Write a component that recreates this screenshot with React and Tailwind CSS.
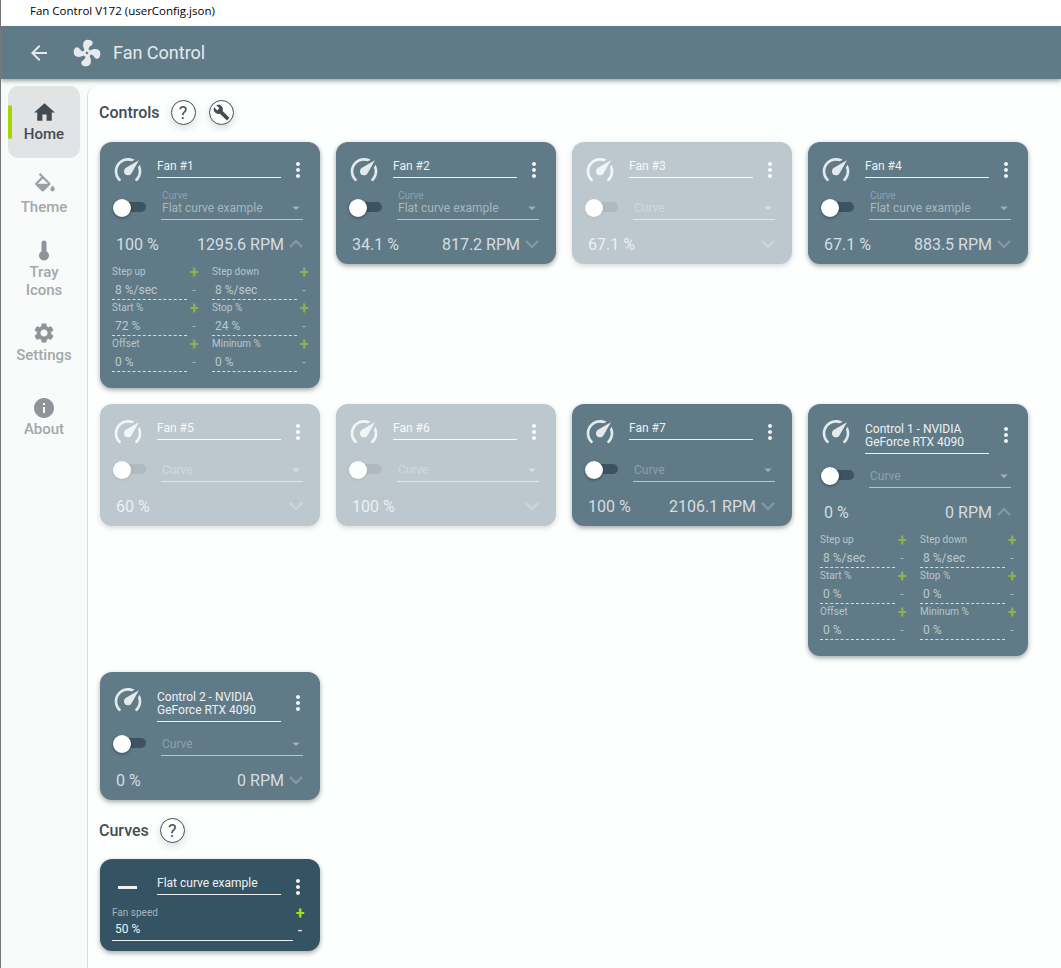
import React from 'react';
import { MdHome, MdSettings, MdInfo, MdBuild, MdArrowBack, MdMoreVert, MdExpandMore, MdExpandLess, MdArrowDropDown } from 'react-icons/md';

const FAN = "M12,11A1,1 0 0,0 11,12A1,1 0 0,0 12,13A1,1 0 0,0 13,12A1,1 0 0,0 12,11M12.5,2C17,2 17.11,5.57 14.75,6.75C13.76,7.24 13.32,8.29 13.13,9.22C13.61,9.42 14.03,9.73 14.35,10.13C18.05,8.13 22.03,8.92 22.03,12.5C22.03,17 18.46,17.1 17.28,14.73C16.78,13.74 15.72,13.3 14.79,13.11C14.59,13.59 14.28,14 13.88,14.34C15.87,18.03 15.08,22 11.5,22C7,22 6.91,18.42 9.27,17.24C10.25,16.75 10.69,15.71 10.89,14.79C10.4,14.59 9.97,14.27 9.65,13.87C5.96,15.85 2,15.07 2,11.5C2,7 5.56,6.89 6.74,9.26C7.24,10.25 8.29,10.68 9.22,10.87C9.41,10.39 9.73,9.97 10.14,9.65C8.15,5.96 8.94,2 12.5,2Z";
const GAUGE = "M12,16A3,3 0 0,1 9,13C9,11.88 9.61,10.9 10.5,10.39L20.21,4.77L14.68,14.35C14.18,15.33 13.17,16 12,16M12,3C13.81,3 15.5,3.5 16.97,4.32L14.87,5.53C14,5.19 13,5 12,5A8,8 0 0,0 4,13C4,15.21 4.89,17.21 6.34,18.65H6.35C6.74,19.04 6.74,19.67 6.35,20.06C5.96,20.45 5.32,20.45 4.93,20.07V20.07C3.12,18.26 2,15.76 2,13A10,10 0 0,1 12,3M22,13C22,15.76 20.88,18.26 19.07,20.07V20.07C18.68,20.45 18.05,20.45 17.66,20.06C17.27,19.67 17.27,19.04 17.66,18.65V18.65C19.11,17.2 20,15.21 20,13C20,12 19.81,11 19.46,10.1L20.67,8C21.5,9.5 22,11.18 22,13Z";
const BUCKET = "M19,11.5C19,11.5 17,13.67 17,15A2,2 0 0,0 19,17A2,2 0 0,0 21,15C21,13.67 19,11.5 19,11.5M5.21,10L10,5.21L14.79,10M16.56,8.94L7.62,0L6.21,1.41L8.59,3.79L3.44,8.94C2.85,9.5 2.85,10.47 3.44,11.06L8.94,16.56C9.23,16.85 9.62,17 10,17C10.38,17 10.77,16.85 11.06,16.56L16.56,11.06C17.15,10.47 17.15,9.5 16.56,8.94Z";
const THERMO = "M14.5 13.2V5A2.5 2.5 0 0 0 9.5 5V13.2A5 5 0 1 0 14.5 13.2Z";

function NavItem({ icon, label, active, className }) {
  return (
    <div className={`relative w-[72px] flex flex-col items-center text-center text-[15px] leading-[18px] font-medium ${active ? 'text-[#434c52]' : 'text-[#a3a8ab]'} ${className}`}>
      {icon}
      <span>{label}</span>
    </div>
  );
}

function Stepper({ label, value, wide }) {
  return (
    <div className="h-9 flex">
      <div className={`${wide ? 'w-[85px]' : 'w-[75px]'} h-[35px] border-b border-dashed border-[#d5dcdf]`}>
        <div className="text-[10px] leading-[12px] text-[#b9c6cc] mt-[1px]">{label}</div>
        <div className="text-[12px] leading-[16px] text-[#bdc9cf] pl-[3px] mt-[4px]">{value}</div>
      </div>
      <div className="w-[14px] flex flex-col items-center">
        <span className="text-[16px] leading-[14px] font-bold mt-[1px] text-[#8cb14f]">+</span>
        <span className="text-[12px] leading-[14px] text-[#a9b9c1] mt-[3px]">-</span>
      </div>
    </div>
  );
}

function Control({ name, curve, pct, rpm, open, off, two, steps }) {
  return (
    <div className={`w-[220px] rounded-[12px] bg-[#607a88] px-3 pt-3 pb-2 shadow-[0_2px_5px_rgba(0,0,0,0.35)] ${off ? 'opacity-40' : ''}`}>
      <div className={`flex ${two ? 'h-[48px]' : 'h-[42px]'}`}>
        <svg viewBox="0 0 24 24" className="w-8 h-8 fill-[#e4e9ec] shrink-0"><path d={GAUGE} /></svg>
        <div className={`ml-[13px] w-[124px] shrink-0 border-b border-[#eef1f3] text-[12px] text-[#eef1f3] ${two ? 'h-[38px] pt-[7px] leading-[13px]' : 'h-[24px] pt-[4px] leading-[16px]'}`}>
          {name}
        </div>
        <MdMoreVert className={`text-[#f2f4f5] text-[24px] shrink-0 ml-[5px] ${two ? 'mt-[7px]' : 'mt-[4px]'}`} />
      </div>
      <div className="flex h-6">
        <div className="relative w-[33px] h-[10px] mt-[6px] bg-[#3d5361] rounded-full ml-[1px]">
          <div className="absolute left-0 top-[-3px] w-[18px] h-[18px] rounded-full bg-white shadow-[0_1px_3px_rgba(0,0,0,0.4)]" />
        </div>
        <div className="relative ml-[15px] w-[142px] h-6 border-b border-[#b9c6cc] text-[#a9b7be]">
          {curve ? <>
            <div className="text-[10px] leading-[10px] pl-[1px] -mt-[5px] text-[#8ea1ab]">Curve</div>
            <div className="text-[12px] leading-[14px] pl-[1px]">{curve}</div>
          </> : <div className="text-[12px] leading-[14px] pl-[1px] pt-[5px] text-[#8ea1ab]">Curve</div>}
          <MdArrowDropDown className="absolute right-[-2px] top-[3px] text-[18px] text-[#9fb0b8]" />
        </div>
      </div>
      <div className="flex items-center h-6 mt-3 text-[16px] text-[#d6dde1]">
        <span className="pl-[4px] pt-[1px]">{pct}</span>
        <span className="ml-auto pt-[1px]">{rpm}</span>
        {open
          ? <MdExpandLess className="text-[28px] text-[#8198a4] -ml-[2px] -mr-[2px]" />
          : <MdExpandMore className="text-[28px] text-[#8198a4] -ml-[2px] -mr-[2px]" />}
      </div>
      {open && (
        <div className="grid grid-cols-[100px_100px] mt-[9px] mb-[7px]">
          {steps.map(([l, v], i) => <Stepper key={l} label={l} value={v} wide={i % 2 === 1} />)}
        </div>
      )}
    </div>
  );
}

function CurveCard() {
  return (
    <div className="w-[220px] h-[92px] rounded-[12px] bg-[#345464] px-3 pt-3 shadow-[0_2px_5px_rgba(0,0,0,0.35)]">
      <div className="flex h-[36px]">
        <div className="w-[19px] h-[3px] bg-[#eef1f3] ml-[6px] mt-[15px] shrink-0" />
        <div className="ml-[20px] w-[124px] shrink-0 h-[24px] border-b border-[#eef1f3] text-[12px] leading-[16px] pt-[4px] text-[#eef1f3]">Flat curve example</div>
        <MdMoreVert className="text-[#f2f4f5] text-[24px] shrink-0 ml-[5px] mt-[4px]" />
      </div>
      <div className="flex">
        <div className="w-[181px] h-[34px] border-b border-[#eef1f3]">
          <div className="text-[10px] leading-[12px] text-[#a6b4bb]">Fan speed</div>
          <div className="text-[12px] leading-[16px] pl-[3px] mt-[2px] text-[#f0f3f4]">50 %</div>
        </div>
        <div className="w-[14px] flex flex-col items-center">
          <span className="text-[16px] leading-[14px] font-bold text-[#aee000]">+</span>
          <span className="text-[14px] leading-[14px] font-medium text-[#dde3e6] mt-[2px]">-</span>
        </div>
      </div>
    </div>
  );
}

function RoundButton({ children, className }) {
  return (
    <div className={`w-[25px] h-[25px] rounded-full border-[1.5px] border-[#434c52] flex items-center justify-center text-[#434c52] text-[18px] shadow-[0_3px_8px_rgba(0,0,0,0.14)] ${className}`}>
      {children}
    </div>
  );
}

const steps = (start, stop) => [
  ['Step up', '8 %/sec'], ['Step down', '8 %/sec'],
  ['Start %', start], ['Stop %', stop],
  ['Offset', '0 %'], ['Mininum %', '0 %'],
];

export default function App() {
  return (
    <div className="h-[968px] overflow-hidden bg-[#f9fafa] border-l border-[#777] flex flex-col font-['Roboto',sans-serif]">
      <div className="h-[26px] shrink-0 bg-white pl-[29px] text-[11.5px] leading-[22px] text-black font-['Open_Sans',sans-serif]">Fan Control V172 (userConfig.json)</div>
      <div className="h-[53px] shrink-0 bg-[#607a88] flex items-center shadow-[0_2px_4px_rgba(0,0,0,0.35)] relative text-[#e6eaec]">
        <MdArrowBack className="text-[24px] ml-[26px]" />
        <svg viewBox="0 0 24 24" className="w-8 h-8 ml-[20px] fill-current"><path d={FAN} /></svg>
        <span className="ml-[10px] text-[18px]">Fan Control</span>
      </div>
      <div className="flex flex-1 min-h-0">
        <div className="w-[86px] shrink-0 pl-[7px] pt-[7px]">
          <NavItem active label="Home" className="h-[72px] pt-[14px] bg-[#e1e3e5] rounded-[10px]" icon={<>
            <div className="absolute left-0 top-[19px] w-[4px] h-[34px] bg-[#a4d600] rounded-[2px]" />
            <MdHome className="text-[25px]" />
          </>} />
          <NavItem label="Theme" className="pt-[15px]" icon={
            <svg viewBox="0 0 24 24" className="w-[26px] h-[26px] fill-[#9a9fa3] -mb-[1px] ml-[1px]"><path d={BUCKET} /></svg>
          } />
          <NavItem label={<>Tray<br />Icons</>} className="pt-[22px]" icon={
            <svg viewBox="0 0 24 24" className="w-6 h-6 fill-[#8f9498] mb-[1px]"><path d={THERMO} /></svg>
          } />
          <NavItem label="Settings" className="pt-[22px]" icon={<MdSettings className="text-[24px] text-[#8f9498] mb-[1px]" />} />
          <NavItem label="About" className="pt-[32px]" icon={<MdInfo className="text-[24px] text-[#8f9498]" />} />
        </div>
        <div className="flex-1 mt-[7px] bg-[#fdfefe] border-l border-[#d9dcde] rounded-tl-[10px] pl-3 pt-[7px]">
          <div className="flex items-center h-[40px] gap-[11px] -mt-[1px]">
            <h2 className="text-[16px] font-medium text-[#434c52] -ml-[1px] pt-[1px]">Controls</h2>
            <RoundButton>?</RoundButton>
            <RoundButton className="ml-[2px]"><MdBuild className="text-[17px]" /></RoundButton>
          </div>
          <div className="grid grid-cols-[repeat(4,220px)] gap-4 items-start mt-[10px]">
            <Control name="Fan #1" curve="Flat curve example" pct="100 %" rpm="1295.6 RPM" open steps={steps('72 %', '24 %')} />
            <Control name="Fan #2" curve="Flat curve example" pct="34.1 %" rpm="817.2 RPM" />
            <Control name="Fan #3" pct="67.1 %" off />
            <Control name="Fan #4" curve="Flat curve example" pct="67.1 %" rpm="883.5 RPM" />
            <Control name="Fan #5" pct="60 %" off />
            <Control name="Fan #6" pct="100 %" off />
            <Control name="Fan #7" pct="100 %" rpm="2106.1 RPM" />
            <Control name={<>Control 1 - NVIDIA<br />GeForce RTX 4090</>} two pct="0 %" rpm="0 RPM" open steps={steps('0 %', '0 %')} />
            <Control name={<>Control 2 - NVIDIA<br />GeForce RTX 4090</>} two pct="0 %" rpm="0 RPM" />
          </div>
          <div className="flex items-center h-[40px] gap-[11px] mt-[10px]">
            <h2 className="text-[16px] font-medium text-[#434c52] -ml-[1px] pt-[1px]">Curves</h2>
            <RoundButton>?</RoundButton>
          </div>
          <div className="mt-[9px]"><CurveCard /></div>
        </div>
      </div>
    </div>
  );
}
